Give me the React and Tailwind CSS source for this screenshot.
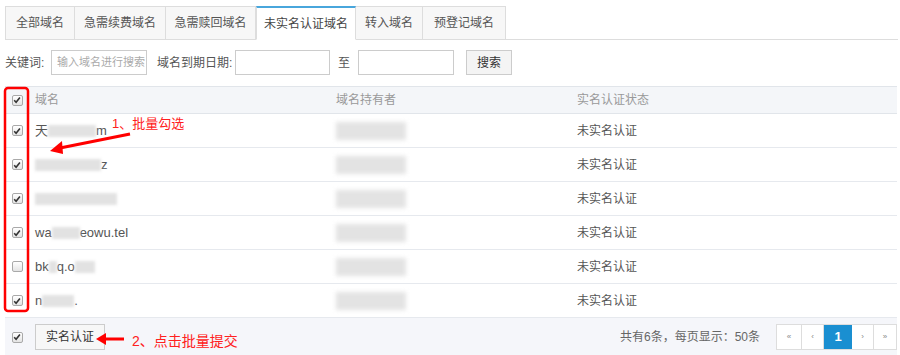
import React from 'react';

const tabs = [
    { name: '全部域名', w: 'w-[70px]' },
    { name: '急需续费域名', w: 'w-[91px]' },
    { name: '急需赎回域名', w: 'w-[90px]' },
    { name: '未实名认证域名', w: 'w-[100px]', active: true },
    { name: '转入域名', w: 'w-[67px]' },
    { name: '预登记域名', w: 'w-[83px]' },
];

const rows = [
    { checked: true, head: '天', tail: 'm', mid: 'w-[48px]' },
    { checked: true, head: '', tail: 'z', mid: 'w-[66px]' },
    { checked: true, head: '', tail: '', mid: 'w-[82px]' },
    { checked: true, head: 'wa', tail: 'eowu.tel', mid: 'w-[28px]' },
    { checked: false, head: 'bk', tail: 'q.on', mid: 'w-[8px]', extra: 'w-[20px]' },
    { checked: true, head: 'n', tail: '.', mid: 'w-[32px]' },
];

const Check = ({ checked }) => (
    <span className="w-[11px] h-[11px] rounded-[2px] border border-[#a9a9a9] bg-gradient-to-b from-white to-[#e4e4e4] flex items-center justify-center">
        {checked && (
            <svg width="8" height="8" viewBox="0 0 8 8">
                <path d="M1.2 4.2 L3.1 6.2 L6.9 1.4" stroke="#333" strokeWidth="1.6" fill="none" />
            </svg>
        )}
    </span>
);

const Blur = ({ w }) => (
    <span className={`inline-block h-[12px] bg-[#e2e2e2] blur-[1.5px] ${w}`}></span>
);

const App = () => {
    return (
        <div className="relative w-[900px] h-[355px] bg-white overflow-hidden text-[12px] text-[#555]" style={{ fontFamily: '"Liberation Sans", "Noto Sans CJK SC", sans-serif' }}>
            {/* tabs */}
            <div className="pt-[6px] pl-[5px] pr-[2px]">
                <div className="flex border-b border-[#ddd] h-[34px]">
                    {tabs.map((t) => (
                        <div
                            key={t.name}
                            className={`${t.w} -mb-px flex items-center justify-center text-[12px] border border-[#ddd] ${t.active ? 'bg-white border-t-2 border-t-[#48a6dc] border-b-white text-[#444]' : 'bg-[#f7f7f7] border-l-0 first:border-l text-[#555]'}`}
                        >
                            {t.name}
                        </div>
                    ))}
                </div>
            </div>

            {/* search row */}
            <div className="flex items-center pl-[5px] mt-[10px] h-[25px] text-[12px] text-[#555]">
                <span className="w-[46px]">关键词:</span>
                <div className="w-[96px] h-[25px] border border-[#ccc] flex items-center px-[5px] text-[11px] text-[#aaa] whitespace-nowrap overflow-hidden">输入域名进行搜索</div>
                <span className="ml-[10px] w-[78px]">域名到期日期:</span>
                <div className="w-[95px] h-[25px] border border-[#ccc]"></div>
                <span className="ml-[8px] w-[20px]">至</span>
                <div className="w-[96px] h-[25px] border border-[#ccc]"></div>
                <div className="ml-[12px] w-[46px] h-[25px] border border-[#ccc] bg-[#f4f4f4] flex items-center justify-center text-[#333]">搜索</div>
            </div>

            {/* table */}
            <div className="ml-[5px] mr-[3px] mt-[11px]">
                <div className="flex items-center h-[28px] bg-[#f4f6f9] border-t border-b border-[#e1e5ea] text-[#999]">
                    <div className="w-[24px] flex justify-center"><Check checked /></div>
                    <div className="w-[307px] pl-[6px]">域名</div>
                    <div className="w-[241px]">域名持有者</div>
                    <div className="flex-1">实名认证状态</div>
                </div>
                {rows.map((r, i) => (
                    <div key={i} className="flex items-center h-[34px] border-b border-[#e6e9ee] text-[#555]">
                        <div className="w-[24px] flex justify-center"><Check checked={r.checked} /></div>
                        <div className="w-[307px] pl-[6px] flex items-center text-[13px]">
                            {r.head && <span>{r.head}</span>}
                            <Blur w={r.mid} />
                            {r.extra && <><span>q.o</span><Blur w={r.extra} /></>}
                            {!r.extra && r.tail && <span>{r.tail}</span>}
                        </div>
                        <div className="w-[241px] flex items-center">
                            <span className="inline-block w-[70px] h-[18px] bg-[#e3e3e3] blur-[2px]"></span>
                        </div>
                        <div className="flex-1">未实名认证</div>
                    </div>
                ))}
                <div className="flex items-center h-[38px] bg-[#f5f6fa]">
                    <div className="w-[24px] flex justify-center"><Check checked /></div>
                    <div className="ml-[6px] w-[70px] h-[26px] border border-[#ccc] bg-[#f7f7f7] flex items-center justify-center text-[#333]">实名认证</div>
                    <div className="flex-1"></div>
                    <span className="text-[#666] mr-[16px]">共有6条，每页显示：50条</span>
                    <div className="flex h-[26px] border border-[#ddd] bg-white text-[8px] text-[#888]">
                        <span className="w-[25px] flex items-center justify-center border-r border-[#ddd]">«</span>
                        <span className="w-[22px] flex items-center justify-center border-r border-[#ddd]">‹</span>
                        <span className="w-[28px] flex items-center justify-center bg-[#1a8fd1] text-white text-[13px] font-bold">1</span>
                        <span className="w-[22px] flex items-center justify-center border-r border-[#ddd]">›</span>
                        <span className="w-[22px] flex items-center justify-center">»</span>
                    </div>
                </div>
            </div>

            {/* red annotations */}
            <svg className="absolute inset-0 pointer-events-none" width="900" height="355">
                <rect x="5" y="88" width="23" height="223" rx="3" fill="none" stroke="#ff0000" strokeWidth="2.5" />
                <path d="M130 134 L60 148" stroke="#ff0000" strokeWidth="3" fill="none" />
                <path d="M50 151 L62 141 L63 154 Z" fill="#ff0000" />
                <path d="M124 339 L104 339" stroke="#ff0000" strokeWidth="3" fill="none" />
                <path d="M96 339 L106 333 L106 345 Z" fill="#ff0000" />
            </svg>
            <span className="absolute left-[112px] top-[114px] text-[13px] text-[#ff2020]">1、批量勾选</span>
            <span className="absolute left-[132px] top-[331px] text-[14px] text-[#ff2020]">2、点击批量提交</span>
        </div>
    );
};

export default App;
